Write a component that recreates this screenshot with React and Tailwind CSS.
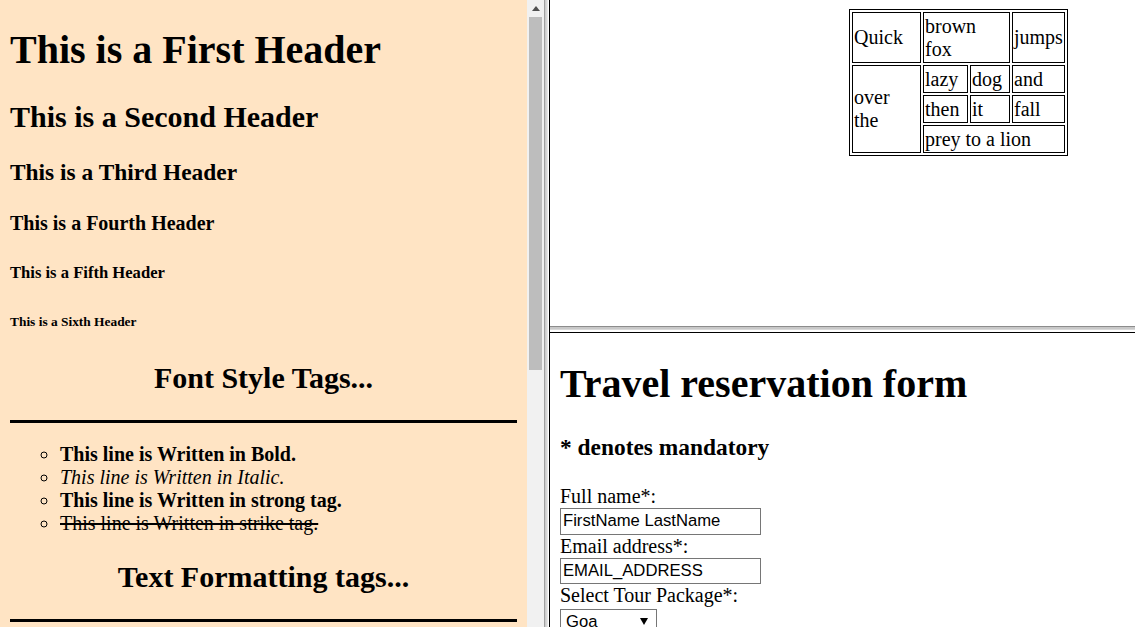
import React from "react";

function Cell({ className = "", children }) {
  return (
    <div className={"flex items-center border border-black px-[1px] leading-[23px] " + className}>
      <span>{children}</span>
    </div>
  );
}

export default function App() {
  return (
    <div className="flex h-[627px] w-[1135px] overflow-hidden bg-white font-['Liberation_Serif',serif] text-[20px] leading-[normal] text-black">
      {/* Left frame */}
      <div className="h-full w-[527px] shrink-0 overflow-hidden bg-[#ffe4c4] px-[10px]">
        <h1 className="mt-[26px] text-[40px] font-bold">This is a First Header</h1>
        <h2 className="mt-[26.8px] text-[30px] font-bold">This is a Second Header</h2>
        <h3 className="mt-[24.9px] text-[23.4px] font-bold">This is a Third Header</h3>
        <h4 className="mt-[26.6px] text-[20px] font-bold">This is a Fourth Header</h4>
        <h5 className="mt-[27.7px] text-[16.6px] font-bold">This is a Fifth Header</h5>
        <h6 className="mt-[31.2px] text-[13.4px] font-bold">This is a Sixth Header</h6>
        <h2 className="mt-[31.2px] text-center text-[30px] font-bold">Font Style Tags...</h2>
        <hr className="mt-[24.9px] h-[3px] border-0 bg-black" />
        <ul className="mt-[20px] list-[circle] pl-[50px]">
          <li className="font-bold">This line is Written in Bold.</li>
          <li className="italic">This line is Written in Italic.</li>
          <li className="font-bold">This line is Written in strong tag.</li>
          <li className="line-through">This line is Written in strike tag.</li>
        </ul>
        <h2 className="mt-[24.9px] text-center text-[30px] font-bold">Text Formatting tags...</h2>
        <hr className="mt-[24.9px] h-[3px] border-0 bg-black" />
      </div>

      {/* Scrollbar */}
      <div className="flex h-full w-[17px] shrink-0 flex-col bg-[#f1f1f1]">
        <div className="flex h-[17px] items-center justify-center">
          <svg width="8" height="5" viewBox="0 0 8 5">
            <polygon points="4,0 8,5 0,5" fill="#505050" />
          </svg>
        </div>
        <div className="mx-[2px] h-[353px] bg-[#bdbdbd]" />
      </div>

      {/* Vertical frame separator */}
      <div className="flex h-full w-[5px] shrink-0">
        <div className="w-px bg-[#a0a0a0]" />
        <div className="w-px bg-[#cdcdcd]" />
        <div className="w-px bg-[#d8d8d8]" />
        <div className="w-px bg-[#e8e8e8]" />
        <div className="w-px bg-white" />
      </div>

      {/* Right column */}
      <div className="flex h-full flex-1 flex-col border-l border-black">
        {/* Top frame */}
        <div className="h-[326px] shrink-0 pl-[299px] pt-[9px]">
          <div className="grid w-fit grid-cols-[69px_45px_40px_53px] grid-rows-[51px_28px_28px_28px] gap-[2px] border border-black p-[2px]">
            <Cell>Quick</Cell>
            <Cell className="col-span-2">
              brown
              <br />
              fox
            </Cell>
            <Cell>jumps</Cell>
            <Cell className="row-span-3">
              over
              <br />
              the
            </Cell>
            <Cell>lazy</Cell>
            <Cell>dog</Cell>
            <Cell>and</Cell>
            <Cell>then</Cell>
            <Cell>it</Cell>
            <Cell>fall</Cell>
            <Cell className="col-span-3">prey to a lion</Cell>
          </div>
        </div>

        {/* Horizontal frame separator */}
        <div className="flex h-[6px] shrink-0 flex-col">
          <div className="h-px bg-[#8c8c8c]" />
          <div className="h-px bg-[#c8c8c8]" />
          <div className="h-px bg-[#c8c8c8]" />
          <div className="h-px bg-[#d8d8d8]" />
          <div className="h-px bg-white" />
          <div className="h-px bg-white" />
        </div>

        {/* Bottom frame */}
        <div className="flex-1 overflow-hidden border-t border-black px-[10px]">
          <h1 className="mt-[26.8px] text-[40px] font-bold">Travel reservation form</h1>
          <h3 className="mt-[26.8px] text-[23.4px] font-bold">* denotes mandatory</h3>
          <div className="mt-[24.5px] leading-[23px]">Full name*:</div>
          <input
            readOnly
            value="FirstName LastName"
            className="block h-[26.7px] w-[201px] border border-[#767676] bg-white px-[2px] font-['Liberation_Sans',sans-serif] text-[16.67px] text-black outline-none"
          />
          <div className="leading-[23px]">Email address*:</div>
          <input
            readOnly
            value="EMAIL_ADDRESS"
            className="block h-[26.7px] w-[201px] border border-[#767676] bg-white px-[2px] font-['Liberation_Sans',sans-serif] text-[16.67px] text-black outline-none"
          />
          <div className="leading-[23px]">Select Tour Package*:</div>
          <div className="mt-[2px] flex h-[25px] w-[97px] items-center justify-between border border-[#767676] bg-white pl-[5px] pr-[8px] font-['Liberation_Sans',sans-serif] text-[16.67px]">
            <span>Goa</span>
            <svg width="8" height="7" viewBox="0 0 8 7">
              <polygon points="0,0 8,0 4,7" fill="#000" />
            </svg>
          </div>
        </div>
      </div>
    </div>
  );
}
